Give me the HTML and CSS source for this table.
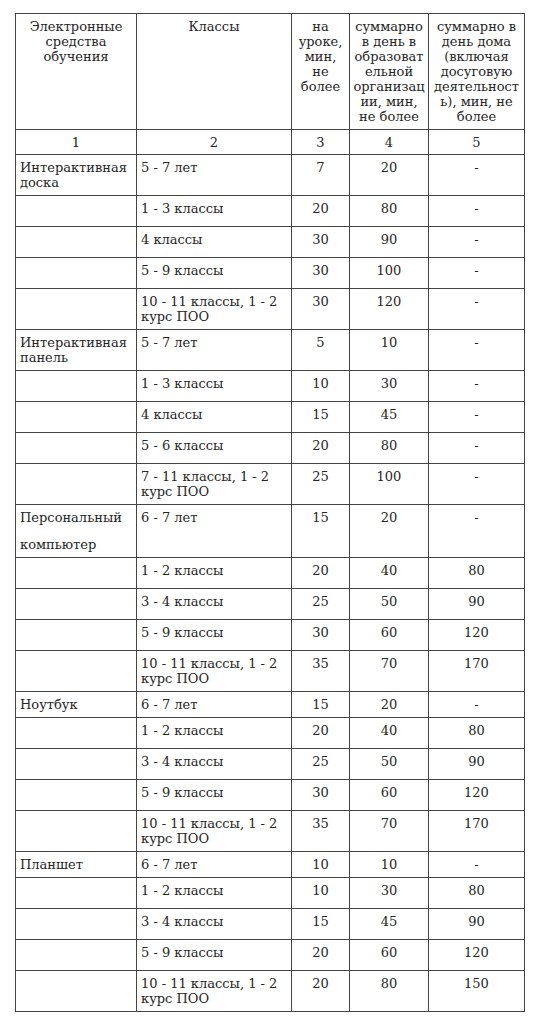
FILE: index.html
```html
<!DOCTYPE html>
<html lang="ru">
<head>
<meta charset="utf-8">
<title>Электронные средства обучения</title>
<link rel="stylesheet" href="styles.css">
</head>
<body>
<table class="norms">
  <colgroup>
    <col class="c1"><col class="c2"><col class="c3"><col class="c4"><col class="c5">
  </colgroup>
  <thead>
    <tr class="head">
      <th>Электронные<br>средства<br>обучения</th>
      <th>Классы</th>
      <th>на<br>уроке,<br>мин,<br>не<br>более</th>
      <th>суммарно<br>в день в<br>образоват<br>ельной<br>организац<br>ии, мин,<br>не более</th>
      <th>суммарно в<br>день дома<br>(включая<br>досуговую<br>деятельност<br>ь), мин, не<br>более</th>
    </tr>
    <tr class="nums">
      <th>1</th><th>2</th><th>3</th><th>4</th><th>5</th>
    </tr>
  </thead>
  <tbody>
    <tr class="tight"><td>Интерактивная<br>доска</td><td>5 - 7 лет</td><td class="n">7</td><td class="n">20</td><td class="n">-</td></tr>
    <tr class="sp"><td></td><td>1 - 3 классы</td><td class="n">20</td><td class="n">80</td><td class="n">-</td></tr>
    <tr class="sp"><td></td><td>4 классы</td><td class="n">30</td><td class="n">90</td><td class="n">-</td></tr>
    <tr class="sp"><td></td><td>5 - 9 классы</td><td class="n">30</td><td class="n">100</td><td class="n">-</td></tr>
    <tr class="tight"><td></td><td>10 - 11 классы, 1 - 2<br>курс ПОО</td><td class="n">30</td><td class="n">120</td><td class="n">-</td></tr>

    <tr class="tight"><td>Интерактивная<br>панель</td><td>5 - 7 лет</td><td class="n">5</td><td class="n">10</td><td class="n">-</td></tr>
    <tr class="sp"><td></td><td>1 - 3 классы</td><td class="n">10</td><td class="n">30</td><td class="n">-</td></tr>
    <tr class="sp"><td></td><td>4 классы</td><td class="n">15</td><td class="n">45</td><td class="n">-</td></tr>
    <tr class="sp"><td></td><td>5 - 6 классы</td><td class="n">20</td><td class="n">80</td><td class="n">-</td></tr>
    <tr class="tight"><td></td><td>7 - 11 классы, 1 - 2<br>курс ПОО</td><td class="n">25</td><td class="n">100</td><td class="n">-</td></tr>

    <tr class="tight"><td><div>Персональный</div><div class="gap">компьютер</div></td><td>6 - 7 лет</td><td class="n">15</td><td class="n">20</td><td class="n">-</td></tr>
    <tr class="sp"><td></td><td>1 - 2 классы</td><td class="n">20</td><td class="n">40</td><td class="n">80</td></tr>
    <tr class="sp"><td></td><td>3 - 4 классы</td><td class="n">25</td><td class="n">50</td><td class="n">90</td></tr>
    <tr class="sp"><td></td><td>5 - 9 классы</td><td class="n">30</td><td class="n">60</td><td class="n">120</td></tr>
    <tr class="tight"><td></td><td>10 - 11 классы, 1 - 2<br>курс ПОО</td><td class="n">35</td><td class="n">70</td><td class="n">170</td></tr>

    <tr class="tight"><td>Ноутбук</td><td>6 - 7 лет</td><td class="n">15</td><td class="n">20</td><td class="n">-</td></tr>
    <tr class="sp"><td></td><td>1 - 2 классы</td><td class="n">20</td><td class="n">40</td><td class="n">80</td></tr>
    <tr class="sp"><td></td><td>3 - 4 классы</td><td class="n">25</td><td class="n">50</td><td class="n">90</td></tr>
    <tr class="sp"><td></td><td>5 - 9 классы</td><td class="n">30</td><td class="n">60</td><td class="n">120</td></tr>
    <tr class="tight"><td></td><td>10 - 11 классы, 1 - 2<br>курс ПОО</td><td class="n">35</td><td class="n">70</td><td class="n">170</td></tr>

    <tr class="tight"><td>Планшет</td><td>6 - 7 лет</td><td class="n">10</td><td class="n">10</td><td class="n">-</td></tr>
    <tr class="sp"><td></td><td>1 - 2 классы</td><td class="n">10</td><td class="n">30</td><td class="n">80</td></tr>
    <tr class="sp"><td></td><td>3 - 4 классы</td><td class="n">15</td><td class="n">45</td><td class="n">90</td></tr>
    <tr class="sp"><td></td><td>5 - 9 классы</td><td class="n">20</td><td class="n">60</td><td class="n">120</td></tr>
    <tr class="tight"><td></td><td>10 - 11 классы, 1 - 2<br>курс ПОО</td><td class="n">20</td><td class="n">80</td><td class="n">150</td></tr>
  </tbody>
</table>
</body>
</html>
```

FILE: styles.css
```css
html, body {
  margin: 0;
  padding: 0;
  background: #ffffff;
}

body {
  font-family: "DejaVu Serif", "Liberation Serif", serif;
  font-size: 13px;
  line-height: 15px;
  color: #262626;
}

.norms {
  margin: 13px 0 0 15px;
  width: 509px;
  table-layout: fixed;
  border-collapse: collapse;
}

.c1 { width: 121px; }
.c2 { width: 155px; }
.c3 { width: 58px; }
.c4 { width: 79px; }
.c5 { width: 96px; }

.norms th,
.norms td {
  border: 1px solid #444444;
  padding: 5px 4px;
  vertical-align: top;
  text-align: left;
  font-weight: normal;
  overflow-wrap: anywhere;
}

.norms th {
  text-align: center;
}

.head th {
  padding: 5px 1px;
}

.nums th {
  padding: 5px 4px 4px;
}

.norms td.n {
  text-align: center;
}

.sp td {
  padding-bottom: 10px;
}

.gap {
  margin-top: 12px;
}
```
